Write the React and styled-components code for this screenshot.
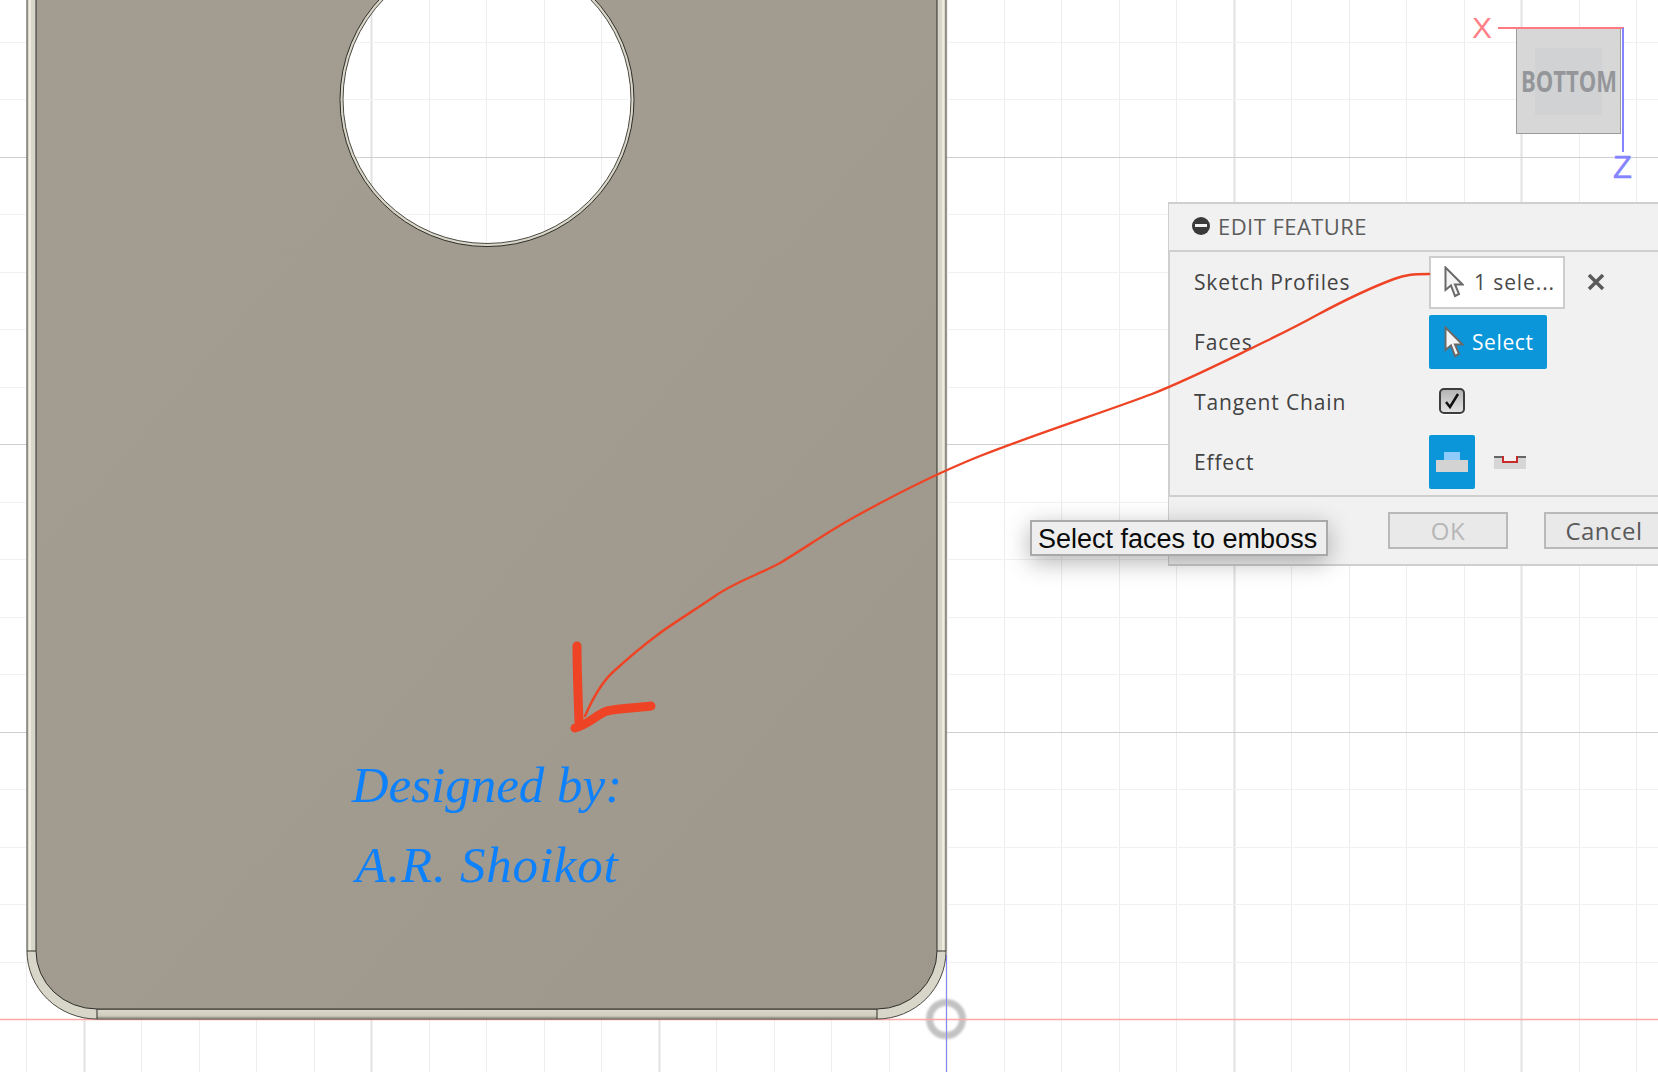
import React from 'react';
import styled, { createGlobalStyle } from 'styled-components';

const GlobalStyle = createGlobalStyle`
  html, body {
    margin: 0;
    padding: 0;
    background: #ffffff;
    overflow: hidden;
  }
`;

const UI_FONT = `"Open Sans", "Noto Sans", sans-serif`;

// Canvas
const Viewport = styled.div`
  position: relative;
  width: 1658px;
  height: 1072px;
  overflow: hidden;
  background: #ffffff;
`;

const CanvasLayer = styled.svg`
  position: absolute;
  left: 0;
  top: 0;
  width: 1658px;
  height: 1072px;
`;

const Signature = styled.div`
  position: absolute;
  left: 287px;
  top: 745px;
  width: 400px;
  text-align: center;
  font-family: "Liberation Serif", serif;
  font-style: italic;
  font-size: 51px;
  line-height: 80px;
  color: #0d80fb;
`;

const SignatureLine = styled.div`
  letter-spacing: ${(p) => p.$spacing};
`;

// Edit feature dialog
const Dialog = styled.div`
  position: absolute;
  left: 1168px;
  top: 202px;
  width: 500px;
  height: 364px;
  box-sizing: border-box;
  display: flex;
  flex-direction: column;
  background: #f1f1f1;
  border-top: 2px solid #cfcfcf;
  border-bottom: 2px solid #cfcfcf;
  border-left: 1px solid #cfcfcf;
  font-family: ${UI_FONT};
`;

const DialogHeader = styled.div`
  display: flex;
  align-items: center;
  gap: 8px;
  height: 48px;
  padding: 0 0 3px 23px;
  box-sizing: border-box;
  border-bottom: 2px solid #cfcfcf;
  color: #5c5c5c;
  font-size: 22px;
  letter-spacing: 0.45px;
`;

const MinusBadge = styled.span`
  position: relative;
  width: 18px;
  height: 18px;
  border-radius: 50%;
  background: #3a3a3a;
  &::after {
    content: '';
    position: absolute;
    left: 3px;
    right: 3px;
    top: 7px;
    height: 3px;
    background: #f1f1f1;
  }
`;

const DialogBody = styled.div`
  display: grid;
  grid-auto-rows: 60px;
  height: 245px;
  box-sizing: border-box;
  border-bottom: 2px solid #cfcfcf;
  border-left: 1px solid #cfcfcf;
`;

const Row = styled.div`
  display: grid;
  grid-template-columns: 235px auto;
  justify-content: start;
  align-items: center;
  padding-left: 24px;
`;

const Label = styled.span`
  font-size: 21px;
  letter-spacing: 0.85px;
  color: #424242;
`;

const Field = styled.div`
  display: flex;
  align-items: center;
`;

const SelectionBox = styled.div`
  display: flex;
  align-items: center;
  gap: 10px;
  width: 136px;
  height: 53px;
  box-sizing: border-box;
  padding-left: 13px;
  background: #ffffff;
  border: 2px solid #cdcdcd;
  color: #4a4a4a;
  font-size: 21px;
  letter-spacing: 0.9px;
  white-space: nowrap;
`;

const ClearIcon = styled.svg`
  width: 18px;
  height: 18px;
  margin-left: 22px;
`;

const SelectButton = styled.div`
  display: flex;
  align-items: center;
  gap: 8px;
  width: 118px;
  height: 54px;
  box-sizing: border-box;
  padding-left: 15px;
  background: #0a96d8;
  border-radius: 2px;
  color: #ffffff;
  font-size: 21px;
  letter-spacing: 0.6px;
`;

const CheckBox = styled.div`
  display: flex;
  align-items: center;
  justify-content: center;
  width: 26px;
  height: 26px;
  margin: -2px 0 0 10px;
  box-sizing: border-box;
  border: 2px solid #3d3d3d;
  border-radius: 5px;
  background: linear-gradient(#b5b5b5, #e2e2e2);
  box-shadow: 0 1px 0 #ffffff;
`;

const EffectButton = styled.div`
  display: flex;
  align-items: center;
  justify-content: center;
  width: 46px;
  height: 54px;
  border-radius: 2px;
  background: ${(p) => (p.$active ? '#0a96d8' : 'transparent')};
  margin-right: ${(p) => (p.$active ? '12px' : '0')};
`;

const DialogFooter = styled.div`
  display: flex;
  gap: 36px;
  padding: 15px 0 0 219px;
`;

const FooterButton = styled.div`
  display: flex;
  align-items: center;
  justify-content: center;
  width: 120px;
  height: 37px;
  box-sizing: border-box;
  border: 2px solid #b9b9b9;
  background: #e9e9e9;
  color: ${(p) => (p.$disabled ? '#b6b6b6' : '#5a5a5a')};
  font-size: 24px;
  letter-spacing: 0.5px;
`;

const Tooltip = styled.div`
  position: absolute;
  left: 1030px;
  top: 520px;
  width: 298px;
  height: 36px;
  box-sizing: border-box;
  display: flex;
  align-items: center;
  padding: 2px 0 0 6px;
  background: #eeeeee;
  border: 2px solid #a9a9a9;
  box-shadow: 0 6px 24px rgba(0, 0, 0, 0.3);
  color: #0b0b0b;
  font-family: "Liberation Sans", Arial, sans-serif;
  font-size: 27px;
  white-space: nowrap;
`;

// Grid data
const W = 1658;
const H = 1072;
const STEP = 57.5;
const crisp = (v) => Math.floor(v) + 0.5;
const gridX = Array.from({ length: 30 }, (_, i) => ({ pos: crisp(84 + (i - 1) * STEP), major: (i - 1) % 5 === 0 }));
const gridY = Array.from({ length: 18 }, (_, i) => ({ pos: crisp(157 + (i - 2) * STEP), major: (i - 2) % 5 === 0 }))
  .filter((g) => g.pos !== 1019.5);

const HOLE = { x: 487, y: 99.5, outer: 147, inner: 144 };
const circlePath = (r) =>
  `M${HOLE.x - r} ${HOLE.y} A${r} ${r} 0 1 0 ${HOLE.x + r} ${HOLE.y} A${r} ${r} 0 1 0 ${HOLE.x - r} ${HOLE.y} Z`;

const OUTER = 'M27 -10 L27 951 A70 68 0 0 0 97 1019 L877 1019 A69 68 0 0 0 946 951 L946 -10 Z';
const FACE = 'M36 -10 L36 951 A61 58 0 0 0 97 1009 L877 1009 A60 58 0 0 0 937 951 L937 -10 Z';

const Scene = () => (
  <CanvasLayer viewBox={`0 0 ${W} ${H}`}>
    <defs>
      <linearGradient id="face" x1="0" y1="0" x2="1" y2="1">
        <stop offset="0" stopColor="#a29d90" />
        <stop offset="0.5" stopColor="#a19c8f" />
        <stop offset="1" stopColor="#9d988b" />
      </linearGradient>
      <linearGradient id="rimBottom" x1="0" y1="0" x2="0" y2="1">
        <stop offset="0" stopColor="#5c5950" />
        <stop offset="0.15" stopColor="#d9d7c9" />
        <stop offset="0.7" stopColor="#cfccbd" />
        <stop offset="1" stopColor="#77746a" />
      </linearGradient>
      <filter id="soft" x="-20%" y="-20%" width="140%" height="140%">
        <feGaussianBlur stdDeviation="0.8" />
      </filter>
    </defs>

    {gridX.map((g) => (
      <line
        key={`x${g.pos}`}
        x1={g.pos}
        x2={g.pos}
        y1={0}
        y2={H}
        stroke={g.major ? '#e2e2e2' : '#ededed'}
        strokeWidth={g.major ? 2 : 1}
      />
    ))}
    {gridY.map((g) => (
      <line key={`y${g.pos}`} x1={0} x2={W} y1={g.pos} y2={g.pos} stroke={g.major ? '#cfcfcf' : '#f1f1f1'} strokeWidth={1} />
    ))}

    <circle cx={946} cy={1019} r={16.5} fill="none" stroke="#c2c2c2" strokeWidth={7} filter="url(#soft)" />
    <line x1={0} x2={W} y1={1019.5} y2={1019.5} stroke="#ffa8a8" strokeWidth={1.5} />
    <line x1={946.5} x2={946.5} y1={955} y2={H} stroke="#8585ff" strokeWidth={1} />

    <path d={`${OUTER} ${circlePath(HOLE.inner)}`} fill="#d8d6c8" fillRule="evenodd" stroke="#4b4942" strokeWidth={1} />
    <path d="M30 952 L30 -10 M943 952 L943 -10" stroke="#eeecdf" strokeWidth={2} />
    <rect x={97} y={1009} width={780} height={10} fill="url(#rimBottom)" />
    <path d={`${FACE} ${circlePath(HOLE.outer)}`} fill="url(#face)" fillRule="evenodd" stroke="#2f2e2a" strokeWidth={1} />
    <path d="M27 951 L36 951 M937 951 L946 951 M97 1009 L97 1019 M877 1009 L877 1019" stroke="#2f2e2a" strokeWidth={1} />

    <rect x={1516.5} y={28.5} width={104} height={105} fill="#d7d7d7" stroke="#9b9b9b" />
    <rect x={1535} y={48} width={67} height={67} fill="#d0d2d4" />
    <text x={1569} y={92} textAnchor="middle" textLength={96} lengthAdjust="spacingAndGlyphs" fontFamily='"Open Sans", sans-serif' fontWeight={700} fontSize={29} fill="#94969a">
      BOTTOM
    </text>
    <line x1={1498} x2={1624} y1={28} y2={28} stroke="#ff7a80" strokeWidth={2} />
    <line x1={1623} x2={1623} y1={28} y2={152} stroke="#8484ff" strokeWidth={2} />
    <text x={1482} y={38} textAnchor="middle" fontFamily='"Liberation Sans", sans-serif' fontSize={30} fill="#ff8086">
      X
    </text>
    <text x={1622.5} y={178} textAnchor="middle" fontFamily='"Liberation Sans", sans-serif' fontSize={31} stroke="#8484ff" strokeWidth={0.4} fill="#8484ff">
      Z
    </text>
  </CanvasLayer>
);

const Annotation = () => (
  <CanvasLayer viewBox={`0 0 ${W} ${H}`}>
    <path
      d="M1429 274 C1412 274 1405 275 1394 279 C1370 288 1345 300 1317 315 C1290 330 1270 339 1250 349 C1215 366 1185 381 1152 394 C1110 410 1030 436 980 456 C945 470 900 492 860 514 C830 530 805 548 780 563 C760 574 735 582 715 596 C695 610 670 625 656 636 C640 648 625 661 613 672 C600 684 592 700 585 716"
      fill="none"
      stroke="#ee4324"
      strokeWidth={2.4}
      strokeLinecap="round"
    />
    <path
      d="M577 646 C577 670 578 695 579 722 M651 706 C635 708 620 708 607 711 C597 714 590 724 575 728"
      fill="none"
      stroke="#ee4324"
      strokeWidth={9}
      strokeLinecap="round"
      strokeLinejoin="round"
    />
  </CanvasLayer>
);

const PointerIcon = () => (
  <svg width="20" height="32" viewBox="0 0 20 32">
    <path
      d="M1.5 1.5 L1.5 24 L7 19.5 L11 30 L15 28 L11 18.5 L18.5 18.5 Z"
      fill="#f4f4f4"
      stroke="#6a6a6a"
      strokeWidth="2"
      strokeLinejoin="miter"
    />
  </svg>
);

const App = () => (
  <Viewport>
    <GlobalStyle />
    <Scene />
    <Signature>
      <SignatureLine $spacing="0">Designed by:</SignatureLine>
      <SignatureLine $spacing="0.8px">A.R. Shoikot</SignatureLine>
    </Signature>

    <Dialog>
      <DialogHeader>
        <MinusBadge />
        EDIT FEATURE
      </DialogHeader>
      <DialogBody>
        <Row>
          <Label>Sketch Profiles</Label>
          <Field>
            <SelectionBox>
              <PointerIcon />1 sele...
            </SelectionBox>
            <ClearIcon viewBox="0 0 18 18">
              <path d="M2 2 L16 16 M16 2 L2 16" stroke="#5a5a5a" strokeWidth="3.5" />
            </ClearIcon>
          </Field>
        </Row>
        <Row>
          <Label>Faces</Label>
          <Field>
            <SelectButton>
              <PointerIcon />
              Select
            </SelectButton>
          </Field>
        </Row>
        <Row>
          <Label>Tangent Chain</Label>
          <Field>
            <CheckBox>
              <svg width="18" height="18" viewBox="0 0 18 18">
                <path d="M3 10 L7 15 L15 2" fill="none" stroke="#111111" strokeWidth="2.5" />
              </svg>
            </CheckBox>
          </Field>
        </Row>
        <Row>
          <Label>Effect</Label>
          <Field>
            <EffectButton $active>
              <svg width="32" height="20" viewBox="0 0 32 20">
                <rect x="8" y="0" width="16" height="8" fill="#8fcbfa" />
                <rect x="0" y="8" width="32" height="12" fill="#d3d3d3" />
              </svg>
            </EffectButton>
            <EffectButton>
              <svg width="32" height="13" viewBox="0 0 32 13">
                <path d="M0 0 H32 V13 H0 Z" fill="#d6d6d6" />
                <rect x="8" y="0" width="16" height="7" fill="#f1f1f1" />
                <path d="M0 1 H8 M24 1 H32" stroke="#666666" strokeWidth="2" />
                <path d="M9 0 V6 H23 V0" fill="none" stroke="#c92a2a" strokeWidth="2" />
              </svg>
            </EffectButton>
          </Field>
        </Row>
      </DialogBody>
      <DialogFooter>
        <FooterButton $disabled>OK</FooterButton>
        <FooterButton>Cancel</FooterButton>
      </DialogFooter>
    </Dialog>

    <Annotation />
    <Tooltip>Select faces to emboss</Tooltip>
  </Viewport>
);

export default App;
